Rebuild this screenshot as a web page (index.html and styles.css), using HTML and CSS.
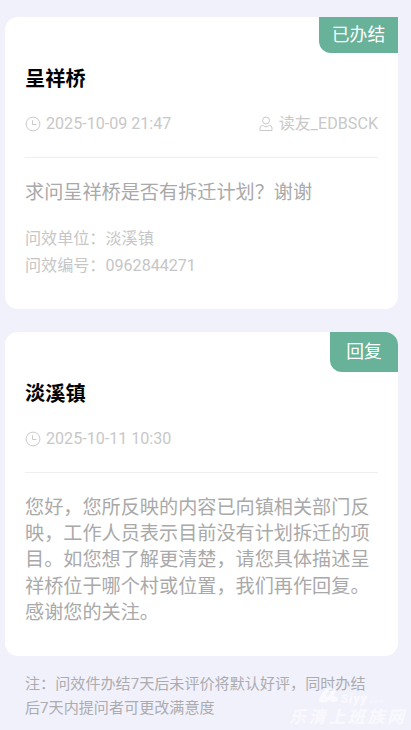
FILE: index.html
```html
<!DOCTYPE html>
<html lang="zh-CN">
<head>
<meta charset="utf-8">
<title>问效详情</title>
<link rel="stylesheet" href="styles.css">
</head>
<body>
<main class="page">
  <article class="card question">
    <span class="tag tag-status">已办结</span>
    <h2 class="title">呈祥桥</h2>
    <div class="meta">
      <span class="meta-item">
        <svg class="icon" viewBox="0 0 16 16"><circle cx="8" cy="8" r="6.9"/><path d="M7.5 4.200v4.300h4"/></svg>
        <time>2025-10-09 21:47</time>
      </span>
      <span class="meta-item">
        <svg class="icon" viewBox="0 0 16 16"><circle cx="8" cy="4.500" r="3.500"/><path d="M4.500 9.500Q2 9.500 2 12v2.500h12V12q0-2.500-2.500-2.500-1 0-1.700.8-1.800 1-3.600 0-.7-.8-1.700-.8z"/></svg>
        <span>读友_EDBSCK</span>
      </span>
    </div>
    <p class="content">求问呈祥桥是否有拆迁计划？谢谢</p>
    <div class="details">
      <div>问效单位：淡溪镇</div>
      <div>问效编号：0962844271</div>
    </div>
  </article>
  <article class="card reply">
    <span class="tag tag-reply">回复</span>
    <h2 class="title">淡溪镇</h2>
    <div class="meta">
      <span class="meta-item">
        <svg class="icon" viewBox="0 0 16 16"><circle cx="8" cy="8" r="6.9"/><path d="M7.5 4.200v4.300h4"/></svg>
        <time>2025-10-11 10:30</time>
      </span>
    </div>
    <p class="content">您好，您所反映的内容已向镇相关部门反<br>映，工作人员表示目前没有计划拆迁的项<br>目。如您想了解更清楚，请您具体描述呈<br>祥桥位于哪个村或位置，我们再作回复。<br>感谢您的关注。</p>
  </article>
  <p class="note">注：问效件办结7天后未评价将默认好评，同时办结<br>后7天内提问者可更改满意度</p>
</main>
<div class="watermark">
  <div class="mark-logo">
    <svg class="mark-icon" viewBox="0 0 19 16"><path fill-rule="evenodd" d="M1 12C3 10 4 4 8 2c4-2 8-1 8 2 0 2-1 3-2 4 3 0 5 2 4 4-2 2-6 2-7-1-2 3-8 4-10 1zM10 4C8 5 7 8 8.500 8.500S12 6 12 4.800 11 3.500 10 4z"/></svg>
    <span>Siyy</span><span class="mark-small">.com</span>
  </div>
  <div class="mark-name">乐清上班族网</div>
</div>
</body>
</html>
```

FILE: styles.css
```css
* { box-sizing: border-box; }
body {
  margin: 0;
  height: 730px;
  overflow: hidden;
  position: relative;
  background: #f1f1fc;
  font-family: Roboto, "Noto Sans CJK SC", sans-serif;
}
.page { padding: 17.4px 13px 0 5px; }
.card {
  position: relative;
  padding: 48.6px 20px 0;
  border-radius: 13px;
  background: #fff;
}
.question { height: 291.6px; border-top-right-radius: 0; }
.reply { height: 324px; margin-top: 23.4px; }
.tag {
  position: absolute;
  top: 0;
  right: 0;
  background: #67b299;
  color: #fff;
  font-size: 17.8px;
  text-align: center;
}
.tag-status {
  width: 79px;
  height: 36px;
  line-height: 36px;
  border-bottom-left-radius: 12px;
}
.tag-reply {
  width: 68px;
  height: 40px;
  line-height: 40px;
  border-radius: 0 13px 0 12px;
}
.title {
  margin: 0;
  font-size: 20.2px;
  font-weight: 700;
  line-height: 26px;
  color: #000;
}
.meta {
  display: flex;
  justify-content: space-between;
  height: 49px;
  margin-top: 17px;
  padding-top: 3px;
  border-bottom: 1px solid #eee;
  font-size: 16.1px;
  line-height: 24px;
  color: #c8c8c8;
}
.meta-item { display: flex; align-items: center; height: 24px; gap: 5px; }
.icon {
  width: 16px;
  height: 16px;
  fill: none;
  stroke: #cacaca;
  stroke-width: 1;
}
.content {
  margin: 22px 0 0;
  font-size: 19.15px;
  line-height: 26.2px;
  color: #a9a9a9;
  white-space: nowrap;
}
.details {
  margin-top: 18.4px;
  font-size: 16.1px;
  line-height: 27.3px;
  color: #c6c6c6;
}
.note {
  margin: 15.4px 0 0 20px;
  font-size: 15.1px;
  line-height: 24px;
  color: #acacae;
  white-space: nowrap;
}
.watermark {
  position: absolute;
  right: 4px;
  bottom: 1px;
  width: 118px;
  color: rgba(255, 255, 255, .65);
}
.mark-logo {
  display: flex;
  align-items: flex-end;
  height: 18px;
  padding-left: 27px;
  font-size: 12px;
  font-weight: 900;
  font-style: italic;
  line-height: 14px;
  letter-spacing: 1px;
}
.mark-icon { width: 24px; height: 18px; margin: 0 1px 1px 0; fill: currentColor; }
.mark-small { font-size: 6px; line-height: 10px; font-weight: 400; }
.mark-name {
  margin-top: -1px;
  font-size: 17px;
  font-style: italic;
  font-weight: 700;
  letter-spacing: 2.6px;
  line-height: 24px;
  white-space: nowrap;
}
```
